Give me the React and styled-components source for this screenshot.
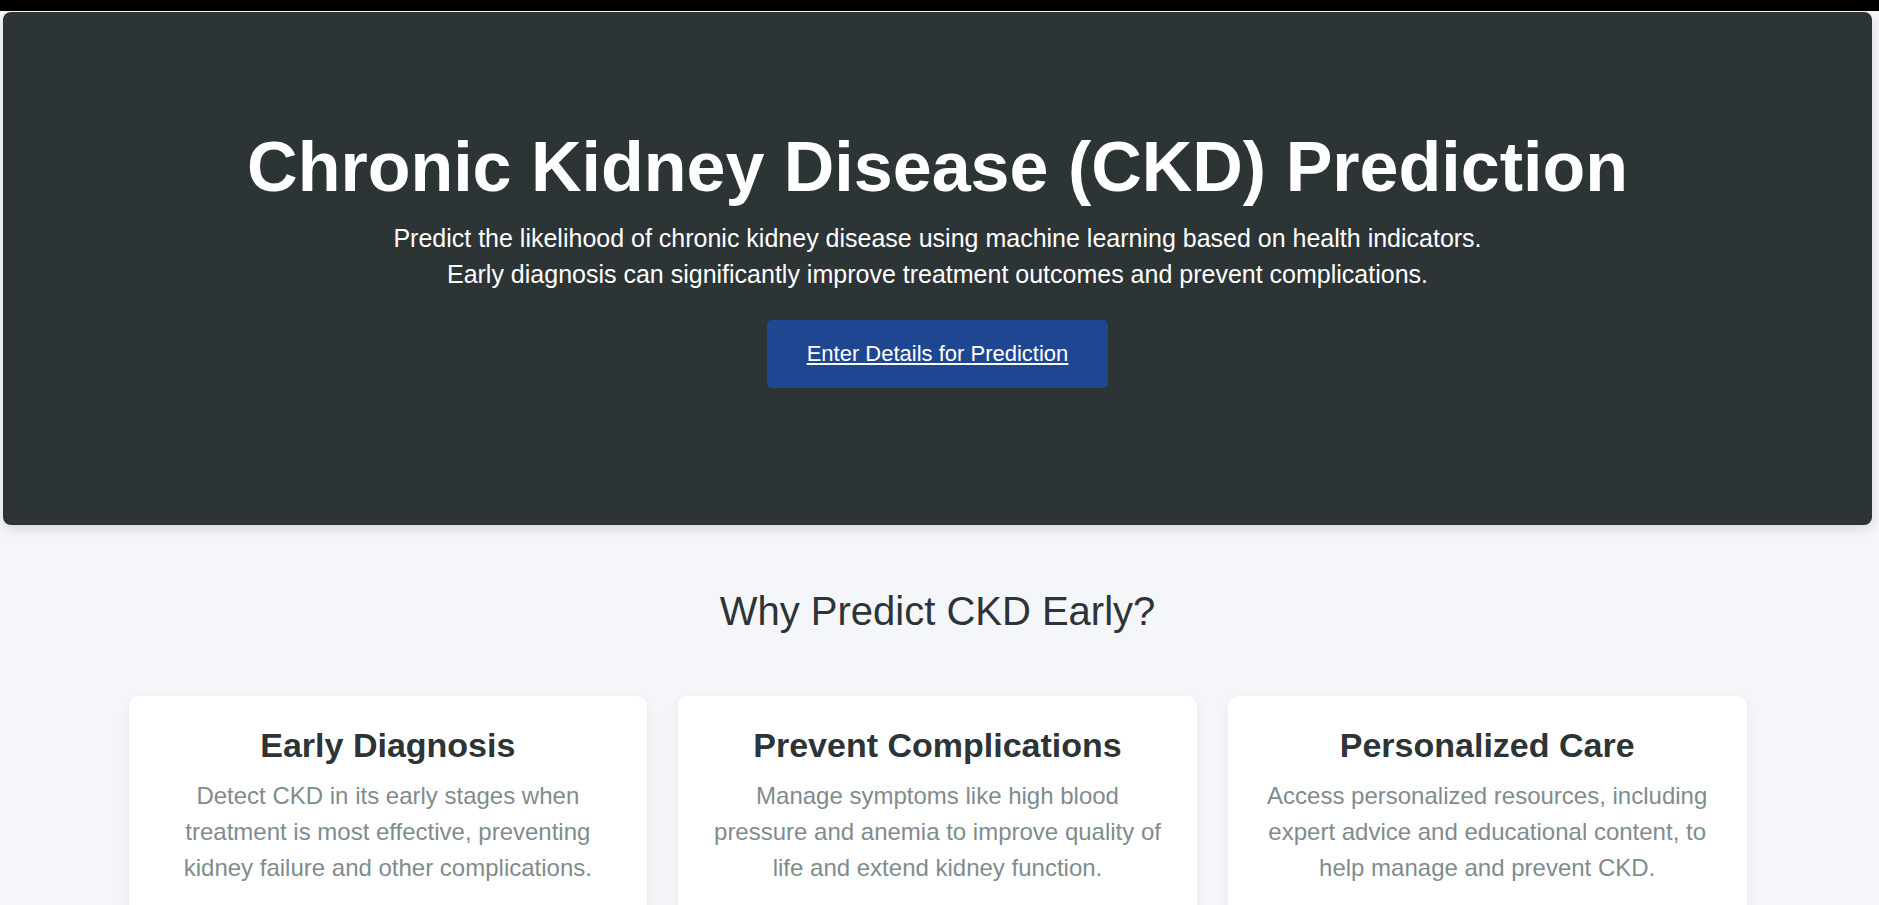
import React from "react";
import styled, { createGlobalStyle } from "styled-components";

const GlobalStyle = createGlobalStyle`
  body {
    margin: 0;
    background: #f5f6fa;
    font-family: "Liberation Sans", Arial, sans-serif;
    color: #2d3436;
  }
`;

const TopBar = styled.div`
  height: 11px;
  background: #000;
`;

const Page = styled.div`
  margin: 0 7px 0 3px;
`;

const Hero = styled.header`
  margin-top: 1px;
  height: 513px;
  box-sizing: border-box;
  padding: 115px 20px 0;
  background: #2d3436;
  border-radius: 8px;
  box-shadow: 0 4px 12px rgba(0, 0, 0, 0.12);
  display: flex;
  flex-direction: column;
  align-items: center;
  text-align: center;
  color: #fff;
`;

const Title = styled.h1`
  margin: 0;
  font-size: 70px;
  line-height: 80px;
  font-weight: 700;
`;

const Lead = styled.p`
  margin: 13px 0 0;
  font-size: 25px;
  line-height: 36px;
`;

const CtaLink = styled.a`
  margin-top: 28px;
  padding: 20px 40px;
  background: #1f4690;
  border-radius: 5px;
  color: #fff;
  font-size: 22px;
  line-height: 28px;
  text-decoration: underline;
`;

const Why = styled.section`
  padding-top: 63px;
  display: flex;
  flex-direction: column;
  align-items: center;
`;

const WhyTitle = styled.h2`
  margin: 0;
  font-size: 40px;
  line-height: 46px;
  font-weight: 400;
  color: #2d3436;
`;

const CardGrid = styled.div`
  margin-top: 62px;
  width: 1618px;
  display: grid;
  grid-template-columns: repeat(3, 1fr);
  gap: 31px;
`;

const Card = styled.article`
  background: #fff;
  border-radius: 10px;
  padding: 30px 30px 40px;
  text-align: center;
  box-shadow: 0 4px 14px rgba(0, 0, 0, 0.06);
`;

const CardTitle = styled.h3`
  margin: 0;
  font-size: 34px;
  line-height: 39px;
  font-weight: 700;
  color: #2d3436;
`;

const CardText = styled.p`
  margin: 13px 0 0;
  font-size: 24px;
  line-height: 36px;
  color: #7f8c8d;
`;

const reasons = [
  {
    title: "Early Diagnosis",
    text: "Detect CKD in its early stages when treatment is most effective, preventing kidney failure and other complications.",
  },
  {
    title: "Prevent Complications",
    text: "Manage symptoms like high blood pressure and anemia to improve quality of life and extend kidney function.",
  },
  {
    title: "Personalized Care",
    text: "Access personalized resources, including expert advice and educational content, to help manage and prevent CKD.",
  },
];

export default function App() {
  return (
    <>
      <GlobalStyle />
      <TopBar />
      <Page>
        <Hero>
          <Title>Chronic Kidney Disease (CKD) Prediction</Title>
          <Lead>
            Predict the likelihood of chronic kidney disease using machine learning based on health indicators.
            <br />
            Early diagnosis can significantly improve treatment outcomes and prevent complications.
          </Lead>
          <CtaLink href="#predict">Enter Details for Prediction</CtaLink>
        </Hero>
        <Why>
          <WhyTitle>Why Predict CKD Early?</WhyTitle>
          <CardGrid>
            {reasons.map((r) => (
              <Card key={r.title}>
                <CardTitle>{r.title}</CardTitle>
                <CardText>{r.text}</CardText>
              </Card>
            ))}
          </CardGrid>
        </Why>
      </Page>
    </>
  );
}
